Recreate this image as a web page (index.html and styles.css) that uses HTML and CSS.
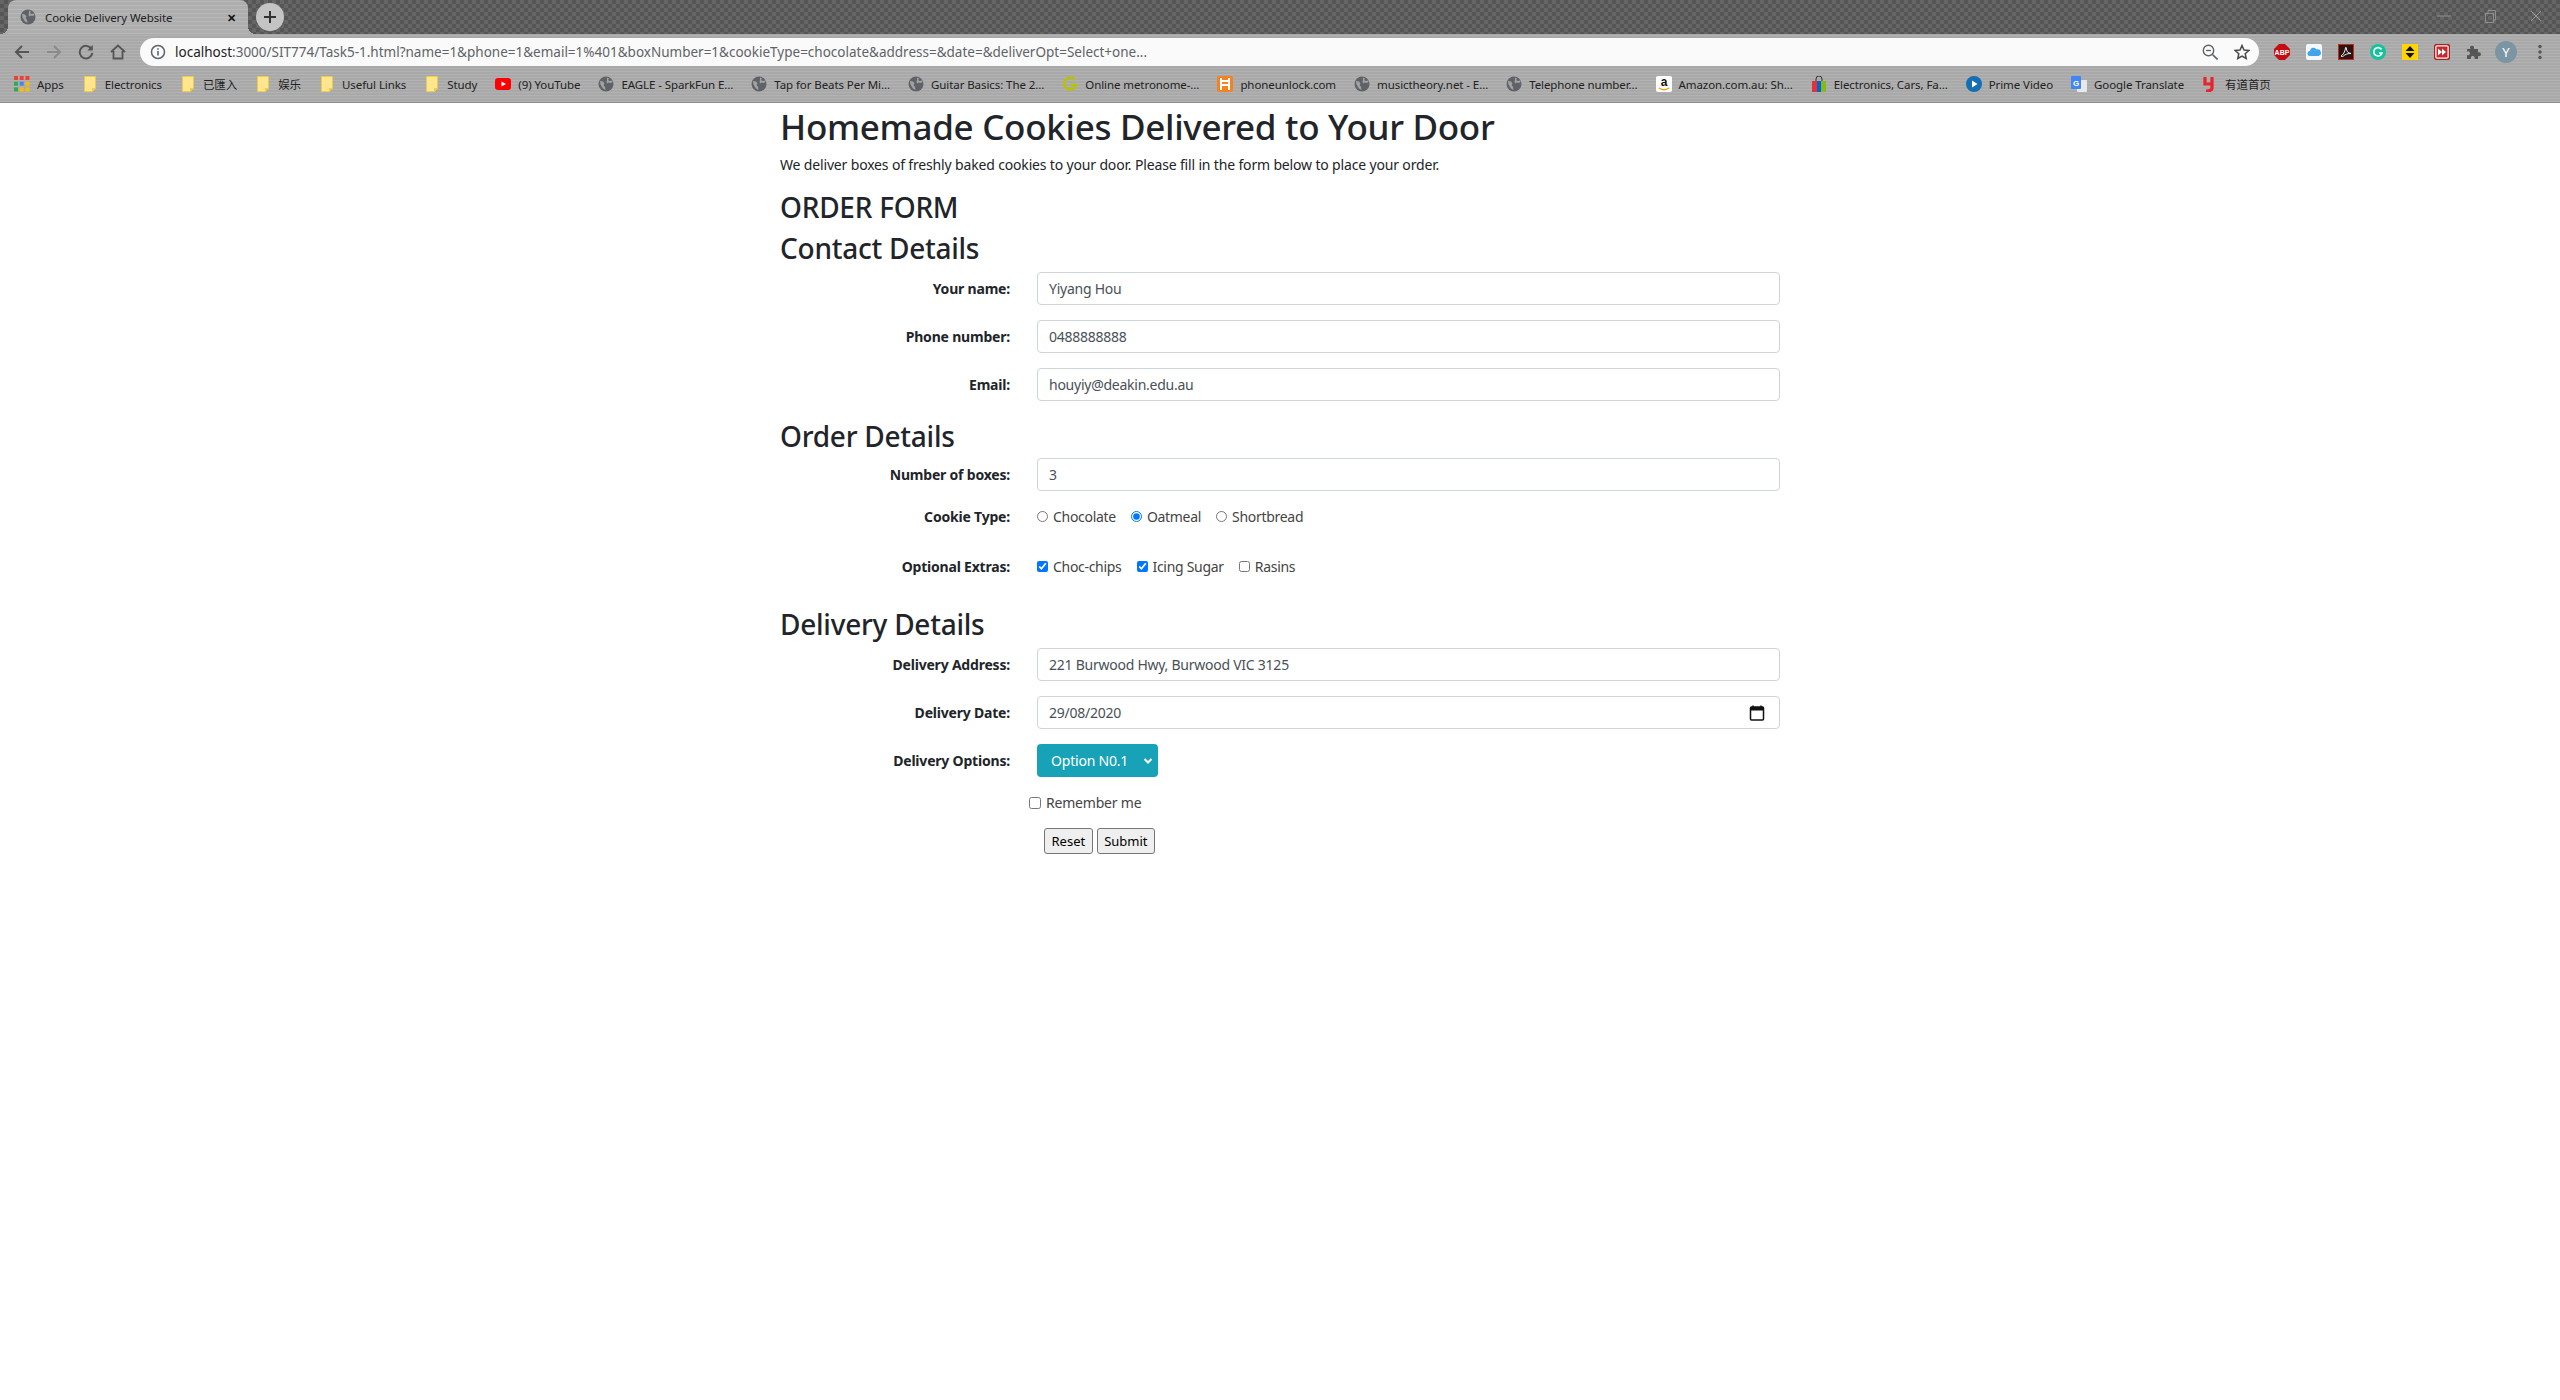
FILE: index.html
```html
<!DOCTYPE html>
<html lang="en">
<head>
  <meta charset="UTF-8" />
  <title>Cookie Delivery Website</title>
  <link rel="stylesheet" href="styles.css">
</head>
<body>

  <svg class="defs" width="0" height="0">
    <symbol id="globe" viewBox="0 0 16 16">
      <circle cx="8" cy="8" r="7.500" fill="#5f6368"/>
      <path d="M2 5l3 .5 1.500 2-1 1.500 1.500 2 .5 3-2.500-1.500-2.500-4zM9 1.500l2 1-1 1.500 1.500 1 2.500-.5.5 1.500-2 1-2-.5-1 1-1-1.500.5-2z" fill="#a3a3a3"/>
    </symbol>
    <symbol id="folder" viewBox="0 0 16 16">
      <path d="M2.500.5h11v12l-3 3h-8z" fill="#ffe68f" stroke="#ecc94f"/>
      <path d="M10.500 15.500v-3h3" fill="#ecc94f" stroke="#ecc94f"/>
    </symbol>
  </svg>

  <div class="tab-strip">
    <div class="tab">
      <svg class="favicon"><use href="#globe"/></svg>
      <span class="tab-title">Cookie Delivery Website</span>
      <span class="tab-close">✕</span>
    </div>
    <div class="new-tab">
      <svg width="14" height="14" viewBox="0 0 14 14"><path d="M7 1v12M1 7h12" stroke="#333" stroke-width="2"/></svg>
    </div>
    <div class="window-btns">
      <svg width="16" height="16" viewBox="0 0 16 16"><path d="M1 8h14" stroke="#8f8f8f"/></svg>
      <svg width="16" height="16" viewBox="0 0 16 16"><path d="M3.500 5.500h8v9h-8zM6 5V2.500h7.500V12H12" fill="none" stroke="#8f8f8f"/></svg>
      <svg width="16" height="16" viewBox="0 0 16 16"><path d="M3 3l10 10M13 3L3 13" stroke="#9a9a9a"/></svg>
    </div>
  </div>

  <div class="toolbar">
    <div class="nav-btns">
      <svg width="16" height="16" viewBox="0 0 16 16"><path d="M15 8H2M8 2L2 8l6 6" fill="none" stroke="#555" stroke-width="2"/></svg>
      <svg width="16" height="16" viewBox="0 0 16 16"><path d="M1 8h13M8 2l6 6-6 6" fill="none" stroke="#8a8a8a" stroke-width="2"/></svg>
      <svg width="16" height="16" viewBox="0 0 16 16"><path d="M13.500 5A6.300 6.300 0 1 0 14.300 9" fill="none" stroke="#555" stroke-width="2"/><path d="M14.800 1v5.500H9.300z" fill="#555"/></svg>
      <svg width="16" height="16" viewBox="0 0 16 16"><path d="M1 8l7-6.500L15 8M3.500 7v7.500h9V7" fill="none" stroke="#555" stroke-width="1.800"/></svg>
    </div>
    <div class="url-bar">
      <svg width="16" height="16" viewBox="0 0 16 16"><circle cx="8" cy="8" r="6.500" fill="none" stroke="#5f6368" stroke-width="1.500"/><path d="M8 7v4.500M8 4.200v1.600" stroke="#5f6368" stroke-width="1.600"/></svg>
      <span class="url-text"><span class="url-host">localhost</span>:3000/SIT774/Task5-1.html?name=1&amp;phone=1&amp;email=1%401&amp;boxNumber=1&amp;cookieType=chocolate&amp;address=&amp;date=&amp;deliverOpt=Select+one...</span>
      <svg width="16" height="16" viewBox="0 0 16 16"><circle cx="6.500" cy="6.500" r="5.200" fill="none" stroke="#5f6368" stroke-width="1.400"/><path d="M10.500 10.500l5 5" stroke="#5f6368" stroke-width="1.600"/><path d="M4 6.500h5" stroke="#5f6368" stroke-width="1.300"/></svg>
      <svg width="16" height="16" viewBox="0 0 16 16"><path d="M8 1.500l2 4.500 4.800.5-3.600 3.200 1 4.800L8 12l-4.200 2.500 1-4.800L1.200 6.500 6 6z" fill="none" stroke="#4a4a4a" stroke-width="1.500"/></svg>
    </div>
    <div class="ext-btns">
      <svg width="16" height="16" viewBox="0 0 16 16"><path d="M5 0h6l5 5v6l-5 5H5l-5-5V5z" fill="#c60d12"/><text x="8" y="10.500" class="abp">ABP</text></svg>
      <svg width="16" height="16" viewBox="0 0 16 16"><rect width="16" height="16" rx="2" fill="#f4f8fc"/><path d="M4 12a2.500 2.500 0 0 1 0-5 3.500 3.500 0 0 1 6.500-1.500A3 3 0 0 1 12.500 12z" fill="#3fa4ea"/></svg>
      <svg width="16" height="16" viewBox="0 0 16 16"><rect x=".5" y=".5" width="15" height="15" fill="#2a1414" stroke="#c42b1c"/><path d="M3 12c2-1 4-4 4.500-8 0-1 .8-1 .8 0 0 3 1.500 5 4.700 5.500-3 0-6 .7-7.500 2.500-1 1-2.500.7-2.500 0z" fill="none" stroke="#eee"/></svg>
      <svg width="16" height="16" viewBox="0 0 16 16"><circle cx="8" cy="8" r="8" fill="#15c39a"/><path d="M11.500 5.500a4.200 4.200 0 1 0 .5 3.500H9" fill="none" stroke="#fff" stroke-width="1.600"/></svg>
      <svg width="16" height="16" viewBox="0 0 16 16"><rect width="16" height="16" fill="#ffd400"/><path d="M8 2l4.500 5h-9zM8 14l4.500-5h-9z" fill="#111"/></svg>
      <svg width="16" height="16" viewBox="0 0 16 16"><rect x=".5" y=".5" width="15" height="15" rx="2.500" fill="#fff" stroke="#a9201f" stroke-width="1.500"/><rect x="2.500" y="2.500" width="11" height="11" fill="#c8262a"/><path d="M4 4.500l4 3.500-4 3.500zM8 4.500l4 3.500-4 3.500z" fill="#fff"/></svg>
      <svg width="16" height="16" viewBox="0 0 16 16"><path d="M1 5h3.500a2 2 0 1 1 3.500-1v1h4v3.500a2 2 0 1 1 0 3.500v3H8.500a2 2 0 1 0-3.500 0H1v-4a2 2 0 1 0 0-3.500z" fill="#555"/></svg>
      <span class="avatar">Y</span>
      <svg width="4" height="16" viewBox="0 0 4 16"><circle cx="2" cy="2.500" r="1.700" fill="#555"/><circle cx="2" cy="8" r="1.700" fill="#555"/><circle cx="2" cy="13.500" r="1.700" fill="#555"/></svg>
    </div>
  </div>

  <div class="bookmarks">
    <div class="bookmark">
      <svg class="favicon" viewBox="0 0 14 14">
        <rect width="3.500" height="3.500" fill="#ea4335"/><rect x="5" width="3.500" height="3.500" fill="#ea4335"/><rect x="10" width="3.500" height="3.500" fill="#ea4335"/>
        <rect y="5" width="3.500" height="3.500" fill="#34a853"/><rect x="5" y="5" width="3.500" height="3.500" fill="#4285f4"/><rect x="10" y="5" width="3.500" height="3.500" fill="#fbbc04"/>
        <rect y="10" width="3.500" height="3.500" fill="#34a853"/><rect x="5" y="10" width="3.500" height="3.500" fill="#fbbc04"/><rect x="10" y="10" width="3.500" height="3.500" fill="#fbbc04"/>
      </svg>Apps
    </div>
    <div class="bookmark"><svg class="favicon"><use href="#folder"/></svg>Electronics</div>
    <div class="bookmark"><svg class="favicon"><use href="#folder"/></svg>已匯入</div>
    <div class="bookmark"><svg class="favicon"><use href="#folder"/></svg>娱乐</div>
    <div class="bookmark"><svg class="favicon"><use href="#folder"/></svg>Useful Links</div>
    <div class="bookmark"><svg class="favicon"><use href="#folder"/></svg>Study</div>
    <div class="bookmark">
      <svg class="favicon" viewBox="0 0 16 16"><rect y="2" width="16" height="12" rx="3" fill="#f00"/><path d="M6.500 5.500L11 8l-4.500 2.500z" fill="#fff"/></svg>(9) YouTube
    </div>
    <div class="bookmark"><svg class="favicon"><use href="#globe"/></svg>EAGLE - SparkFun E...</div>
    <div class="bookmark"><svg class="favicon"><use href="#globe"/></svg>Tap for Beats Per Mi...</div>
    <div class="bookmark"><svg class="favicon"><use href="#globe"/></svg>Guitar Basics: The 2...</div>
    <div class="bookmark">
      <svg class="favicon" viewBox="0 0 16 16"><path d="M13 4a6 6 0 1 0 1 5H8" fill="none" stroke="#b5c400" stroke-width="2.500"/></svg>Online metronome-...
    </div>
    <div class="bookmark">
      <svg class="favicon" viewBox="0 0 16 16"><rect width="16" height="16" rx="2" fill="#f58220"/><path d="M4 2v12M12 2v12M4 5h8M4 9h8" fill="none" stroke="#fff" stroke-width="2"/></svg>phoneunlock.com
    </div>
    <div class="bookmark"><svg class="favicon"><use href="#globe"/></svg>musictheory.net - E...</div>
    <div class="bookmark"><svg class="favicon"><use href="#globe"/></svg>Telephone number...</div>
    <div class="bookmark">
      <svg class="favicon" viewBox="0 0 16 16"><rect width="16" height="16" rx="2" fill="#fff"/><text x="8" y="10" class="amazon">a</text><path d="M3 12c3 2 7 2 10 0" fill="none" stroke="#f90" stroke-width="1.500"/></svg>Amazon.com.au: Sh...
    </div>
    <div class="bookmark">
      <svg class="favicon" viewBox="0 0 16 16"><path d="M5 5V3a3 3 0 0 1 6 0v2" fill="none" stroke="#333"/><rect x="1" y="5" width="5" height="11" fill="#e53238"/><rect x="6" y="5" width="4" height="11" fill="#0064d2"/><rect x="10" y="5" width="5" height="11" fill="#86b817"/></svg>Electronics, Cars, Fa...
    </div>
    <div class="bookmark">
      <svg class="favicon" viewBox="0 0 16 16"><circle cx="8" cy="8" r="8" fill="#146eb4"/><path d="M6 4.500L11.500 8 6 11.500z" fill="#fff"/></svg>Prime Video
    </div>
    <div class="bookmark">
      <svg class="favicon" viewBox="0 0 16 16"><rect x="6" y="4" width="10" height="12" rx="1" fill="#e8e8e8"/><rect width="10" height="13" rx="1" fill="#4285f4"/><text x="5" y="9.500" class="gt">G</text></svg>Google Translate
    </div>
    <div class="bookmark">
      <svg class="favicon" viewBox="0 0 16 16"><path d="M3 1v7h7V1M10 8v4c0 2-2 3-6 3" fill="none" stroke="#e8232c" stroke-width="3.200"/></svg>有道首页
    </div>
  </div>

  <div class="container">
    <h1>Homemade Cookies Delivered to Your Door</h1>
    <p class="intro">We deliver boxes of freshly baked cookies to your door. Please fill in the form below to place your order.</p>

    <h2>ORDER FORM</h2>
    <h2 class="section-first">Contact Details</h2>

    <form>
      <div class="form-row">
        <label>Your name:</label>
        <input class="form-control" type="text" value="Yiyang Hou">
      </div>
      <div class="form-row">
        <label>Phone number:</label>
        <input class="form-control" type="text" value="0488888888">
      </div>
      <div class="form-row">
        <label>Email:</label>
        <input class="form-control" type="text" value="houyiy@deakin.edu.au">
      </div>

      <h2 class="section">Order Details</h2>
      <div class="form-row">
        <label>Number of boxes:</label>
        <input class="form-control" type="text" value="3">
      </div>
      <div class="form-row choice-row">
        <label>Cookie Type:</label>
        <div class="choices">
          <span class="choice"><input type="radio" name="cookie">Chocolate</span>
          <span class="choice"><input type="radio" name="cookie" checked>Oatmeal</span>
          <span class="choice"><input type="radio" name="cookie">Shortbread</span>
        </div>
      </div>
      <div class="form-row choice-row">
        <label>Optional Extras:</label>
        <div class="choices">
          <span class="choice"><input type="checkbox" checked>Choc-chips</span>
          <span class="choice"><input type="checkbox" checked>Icing Sugar</span>
          <span class="choice"><input type="checkbox">Rasins</span>
        </div>
      </div>

      <h2 class="section delivery">Delivery Details</h2>
      <div class="form-row">
        <label>Delivery Address:</label>
        <input class="form-control" type="text" value="221 Burwood Hwy, Burwood VIC 3125">
      </div>
      <div class="form-row">
        <label>Delivery Date:</label>
        <div class="form-control date-control">
          <span>29/08/2020</span>
          <svg width="16" height="16" viewBox="0 0 16 16"><path d="M4 .5v3M12 .5v3" stroke="#111" stroke-width="1.500"/><rect x="1.500" y="2" width="13" height="13" rx="1" fill="none" stroke="#111" stroke-width="1.500"/><rect x="1.500" y="2" width="13" height="3.500" fill="#111"/></svg>
        </div>
      </div>
      <div class="form-row">
        <label>Delivery Options:</label>
        <div class="select-btn">
          <span>Option N0.1</span>
          <svg width="10" height="8" viewBox="0 0 10 8"><path d="M1.500 2L5 5.500 8.500 2" fill="none" stroke="#fff" stroke-width="2"/></svg>
        </div>
      </div>
      <div class="remember">
        <input type="checkbox">Remember me
      </div>
      <div class="actions">
        <button type="button">Reset</button>
        <button type="button">Submit</button>
      </div>
    </form>
  </div>

</body>
</html>
```

FILE: styles.css
```css
* {
  box-sizing: border-box;
}

body {
  margin: 0;
  background-color: white;
  color: #212529;
  font-family: 'Noto Sans', 'Noto Sans CJK SC', sans-serif;
  font-size: 14px;
}

.defs {
  position: absolute;
}

.favicon {
  width: 16px;
  height: 16px;
  flex: none;
}

/* browser chrome */
.tab-strip {
  display: flex;
  align-items: flex-end;
  height: 34px;
  padding-left: 8px;
  background-color: #5c5c5c;
  background-image: repeating-conic-gradient(#565656 0 25%, #666 0 50%);
  background-size: 8px 8px;
}

.tab {
  position: relative;
  display: flex;
  align-items: center;
  width: 240px;
  height: 34px;
  padding: 0 12px;
  border-radius: 8px 8px 0 0;
  background-color: #aeaeae;
  background-image: repeating-linear-gradient(0deg, rgba(255,255,255,.12) 0 1px, transparent 1px 4px);
  font-size: 11.5px;
  letter-spacing: -.1px;
  color: #222;
}

.tab::before,
.tab::after {
  content: "";
  position: absolute;
  bottom: 0;
  width: 8px;
  height: 8px;
}

.tab::before {
  left: -8px;
  background: radial-gradient(circle at 0 0, transparent 8px, #aeaeae 8px);
}

.tab::after {
  right: -8px;
  background: radial-gradient(circle at 100% 0, transparent 8px, #aeaeae 8px);
}

.tab-title {
  margin-left: 9px;
  flex: 1;
}

.tab-close {
  font-size: 11px;
  font-weight: bold;
  color: #111;
}

.new-tab {
  display: flex;
  align-items: center;
  justify-content: center;
  width: 28px;
  height: 28px;
  margin: 0 0 3px 8px;
  border-radius: 50%;
  background-color: #c4c4c4;
}

.window-btns {
  display: flex;
  gap: 30px;
  margin-left: auto;
  padding: 0 16px 10px 0;
}

.toolbar {
  display: flex;
  align-items: center;
  height: 32px;
  padding-top: 4px;
  background-color: #a9a9a9;
  background-image: repeating-linear-gradient(0deg, rgba(255,255,255,.1) 0 1px, transparent 1px 3px);
}

.nav-btns {
  display: flex;
  gap: 16px;
  width: 140px;
  padding-left: 14px;
}

.url-bar {
  display: flex;
  align-items: center;
  gap: 16px;
  width: 2119px;
  height: 28px;
  padding: 0 9px 0 10px;
  border-radius: 14px;
  background-color: #fafafa;
  font-size: 13.5px;
  color: #5f6368;
}

.url-text {
  flex: 1;
  margin-left: -7px;
}

.url-host {
  color: #202124;
}

.ext-btns {
  display: flex;
  align-items: center;
  gap: 16px;
  padding-left: 15px;
}

.abp {
  font-family: 'Liberation Sans', sans-serif;
  font-size: 7px;
  font-weight: bold;
  fill: white;
  text-anchor: middle;
}

.amazon {
  font-family: 'Liberation Sans', sans-serif;
  font-size: 12px;
  font-weight: bold;
  fill: #111;
  text-anchor: middle;
}

.gt {
  font-family: 'Liberation Sans', sans-serif;
  font-size: 8px;
  font-weight: bold;
  fill: white;
  text-anchor: middle;
}

.avatar {
  display: flex;
  align-items: center;
  justify-content: center;
  width: 22px;
  height: 22px;
  margin: 0 5px 0 -3px;
  border-radius: 50%;
  background-color: #7c95a3;
  color: white;
  font-size: 13px;
}

.bookmarks {
  display: flex;
  align-items: center;
  gap: 18px;
  height: 37px;
  padding-left: 14px;
  border-bottom: 1px solid #8c8c8c;
  background-color: #a9a9a9;
  background-image: repeating-linear-gradient(0deg, rgba(255,255,255,.1) 0 1px, transparent 1px 3px);
  font-size: 11.5px;
  letter-spacing: -.08px;
  color: #222;
}

.bookmark {
  display: flex;
  align-items: center;
  gap: 7px;
  white-space: nowrap;
}

/* page */
.container {
  width: 1000px;
  margin: 0 auto;
  padding-top: 2px;
}

h1 {
  margin: 0;
  font-size: 35px;
  font-weight: 500;
  letter-spacing: -.3px;
  line-height: 43px;
}

.intro {
  margin: 6px 0 0;
  font-size: 14px;
  letter-spacing: -.16px;
  line-height: 21px;
}

h2 {
  margin: 0;
  font-size: 28px;
  font-weight: 500;
  letter-spacing: -.25px;
  line-height: 35px;
}

.intro + h2 {
  margin-top: 15px;
}

.section-first {
  margin: 6px 0;
}

.section {
  margin: 18px 0 4px;
}

.delivery {
  margin: 30px 0 6px;
}

form {
  letter-spacing: -.2px;
}

.form-row {
  display: flex;
  align-items: center;
  margin-bottom: 15px;
}

.form-row label {
  width: 230px;
  text-align: right;
  font-weight: bold;
}

.form-control {
  width: 743px;
  height: 33px;
  margin-left: 27px;
  padding: 0 11px;
  border: 1px solid #ced4da;
  border-radius: 4px;
  background-color: white;
  color: #495057;
  font-family: inherit;
  font-size: 14px;
  letter-spacing: -.25px;
}

.date-control {
  display: flex;
  align-items: center;
  justify-content: space-between;
  padding-right: 14px;
}

.choice-row {
  height: 21px;
  margin-bottom: 29px;
}

.choices {
  display: flex;
  gap: 15px;
  margin-left: 27px;
}

.choice {
  display: flex;
  align-items: center;
  gap: 5px;
  color: #444;
  letter-spacing: -.3px;
}

.choice input,
.remember input {
  width: 11px;
  height: 11px;
  margin: 0;
}

.select-btn {
  display: flex;
  align-items: center;
  justify-content: space-between;
  width: 121px;
  height: 33px;
  margin-left: 27px;
  padding: 0 5px 0 14px;
  border-radius: 4px;
  background-color: #17a2b8;
  color: white;
}

.remember {
  display: flex;
  align-items: center;
  gap: 5px;
  margin-left: 249px;
  line-height: 21px;
  color: #444;
}

.remember input {
  width: 12px;
  height: 12px;
}

.actions {
  display: flex;
  gap: 4px;
  margin: 15px 0 0 264px;
}

.actions button {
  height: 26px;
  padding: 0 6.5px;
  border: 1px solid #767676;
  border-radius: 3px;
  background-color: #efefef;
  color: black;
  font-family: inherit;
  font-size: 13px;
}
```
